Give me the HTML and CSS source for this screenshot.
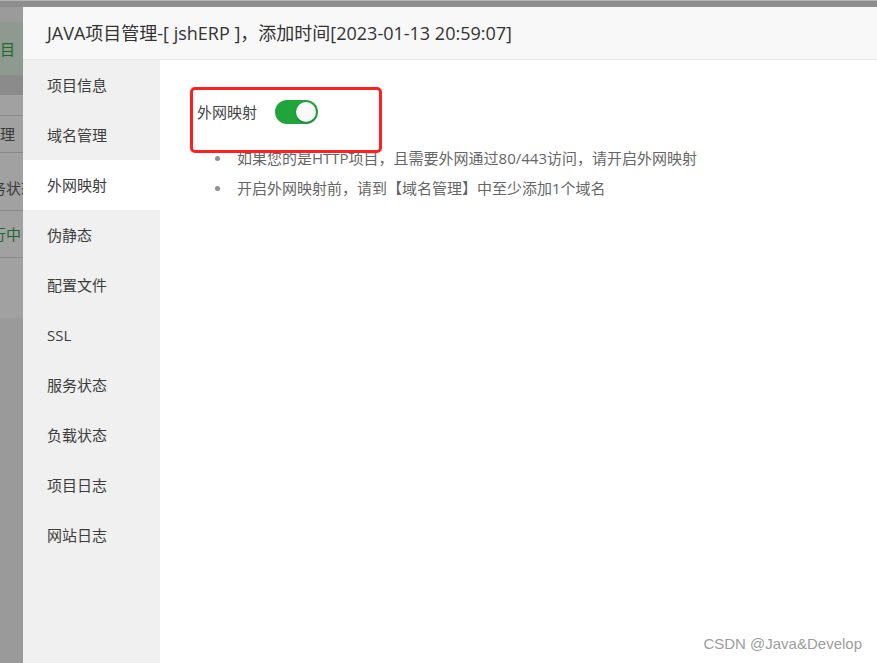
FILE: index.html
```html
<!DOCTYPE html>
<html lang="zh-CN">
<head>
<meta charset="utf-8">
<title>JAVA项目管理</title>
<link rel="stylesheet" href="styles.css">
</head>
<body>
<div class="page">
  <div class="under">
    <div class="u-top"></div>
    <div class="u-gap"></div>
    <div class="u-sel"><span class="u-green">目</span></div>
    <div class="u-dark"></div>
    <div class="u-plain"></div>
    <div class="u-row r1"><span class="u-text">理</span></div>
    <div class="u-row r2"><span class="u-text shift">务状态</span></div>
    <div class="u-row r3"><span class="u-green shift">行中</span><span class="u-bar"></span></div>
    <div class="u-row r4"></div>
    <div class="u-foot"></div>
  </div>

  <div class="modal">
    <div class="modal-head">JAVA项目管理-[ jshERP ]，添加时间[2023-01-13 20:59:07]</div>
    <div class="modal-body">
      <ul class="side">
        <li class="side-item">项目信息</li>
        <li class="side-item">域名管理</li>
        <li class="side-item active">外网映射</li>
        <li class="side-item">伪静态</li>
        <li class="side-item">配置文件</li>
        <li class="side-item">SSL</li>
        <li class="side-item">服务状态</li>
        <li class="side-item">负载状态</li>
        <li class="side-item">项目日志</li>
        <li class="side-item">网站日志</li>
      </ul>
      <div class="content">
        <div class="form-row">
          <span class="label">外网映射</span>
          <span class="switch"><span class="knob"></span></span>
        </div>
        <ul class="tips">
          <li>如果您的是HTTP项目，且需要外网通过80/443访问，请开启外网映射</li>
          <li>开启外网映射前，请到【域名管理】中至少添加1个域名</li>
        </ul>
        <div class="mark"></div>
        <div class="watermark">CSDN @Java&amp;Develop</div>
      </div>
    </div>
  </div>
</div>
</body>
</html>
```

FILE: styles.css
```css
* { box-sizing: border-box; }
html, body { margin: 0; padding: 0; }
body {
  font-family: "Open Sans", "Noto Sans CJK SC", sans-serif;
  background: #a1a1a1;
}
.page {
  position: relative;
  width: 877px;
  height: 663px;
  overflow: hidden;
  background: #a1a1a1;
}

/* dimmed page underneath the dialog */
.under {
  display: flex;
  flex-direction: column;
  height: 100%;
}
.u-top { height: 7px; background: #8e8e8e; border-top: 1px solid #b4b4b4; }
.u-gap { height: 15px; background: #9b9b9b; }
.u-sel {
  height: 53px;
  background: #8e9a90;
  display: flex;
  align-items: center;
}
.u-dark { height: 20px; background: #8b8b8b; }
.u-plain { height: 20px; background: #a1a1a1; }
.u-row {
  border-top: 1px solid #8a8a8a;
  display: flex;
  align-items: center;
  font-size: 15px;
  line-height: 20px;
  white-space: nowrap;
}
.r1 { height: 37px; }
.r2 { height: 58px; padding-top: 12px; }
.r3 { height: 47px; }
.r4 { height: 61px; }
.u-foot { flex: 1; background: #9a9a9a; }
.u-green { color: #1c6a2e; font-size: 15px; line-height: 20px; }
.u-text { color: #3a3a3a; }
.shift { margin-left: -9px; }
.u-bar { display: inline-block; width: 3px; height: 14px; background: #16802e; margin-left: 2px; }

/* dialog */
.modal {
  position: absolute;
  left: 23px;
  top: 7px;
  right: 0;
  bottom: 0;
  background: #fff;
  display: flex;
  flex-direction: column;
}
.modal-head {
  height: 53px;
  flex: none;
  background: #f8f8f8;
  border-bottom: 1px solid #e8e8e8;
  padding-left: 24px;
  font-size: 18px;
  line-height: 52px;
  color: #333;
  white-space: nowrap;
}
.modal-body {
  flex: 1;
  display: flex;
}
.side {
  list-style: none;
  margin: 0;
  padding: 0;
  width: 137px;
  flex: none;
  background: #f0f0f0;
}
.side-item {
  height: 50px;
  line-height: 50px;
  padding-left: 24px;
  font-size: 15px;
  color: #3d3d3d;
}
.side-item.active { background: #fff; }

.content {
  flex: 1;
  position: relative;
  padding: 40px 0 0 37px;
}
.form-row {
  display: flex;
  align-items: center;
  height: 23px;
}
.label {
  font-size: 15px;
  color: #444;
  line-height: 20px;
  width: 60px;
  white-space: nowrap;
}
.switch {
  margin-left: 18px;
  width: 43px;
  height: 24px;
  border-radius: 12px;
  background: #20a53a;
  position: relative;
  display: inline-block;
}
.knob {
  position: absolute;
  right: 2px;
  top: 2px;
  width: 20px;
  height: 20px;
  border-radius: 50%;
  background: #fbfbfb;
  box-shadow: 0 1px 2px rgba(0,0,0,0.25);
}
.tips {
  list-style: none;
  margin: 20px 0 0;
  padding-left: 18px;
  font-size: 15px;
  line-height: 30px;
  color: #666;
  white-space: nowrap;
}
.tips li {
  display: flex;
  align-items: center;
}
.tips li::before {
  content: "";
  width: 5px;
  height: 5px;
  border-radius: 50%;
  background: #8f8f8f;
  margin-right: 17px;
  flex: none;
}

.mark {
  position: absolute;
  left: 30px;
  top: 27px;
  width: 192px;
  height: 66px;
  border: 3px solid #ff1f1f;
  border-radius: 5px;
}
.watermark {
  position: absolute;
  right: 15px;
  bottom: 9px;
  font-family: "Liberation Sans", Arial, sans-serif;
  font-size: 15px;
  line-height: 20px;
  color: #9d9d9d;
}
```
